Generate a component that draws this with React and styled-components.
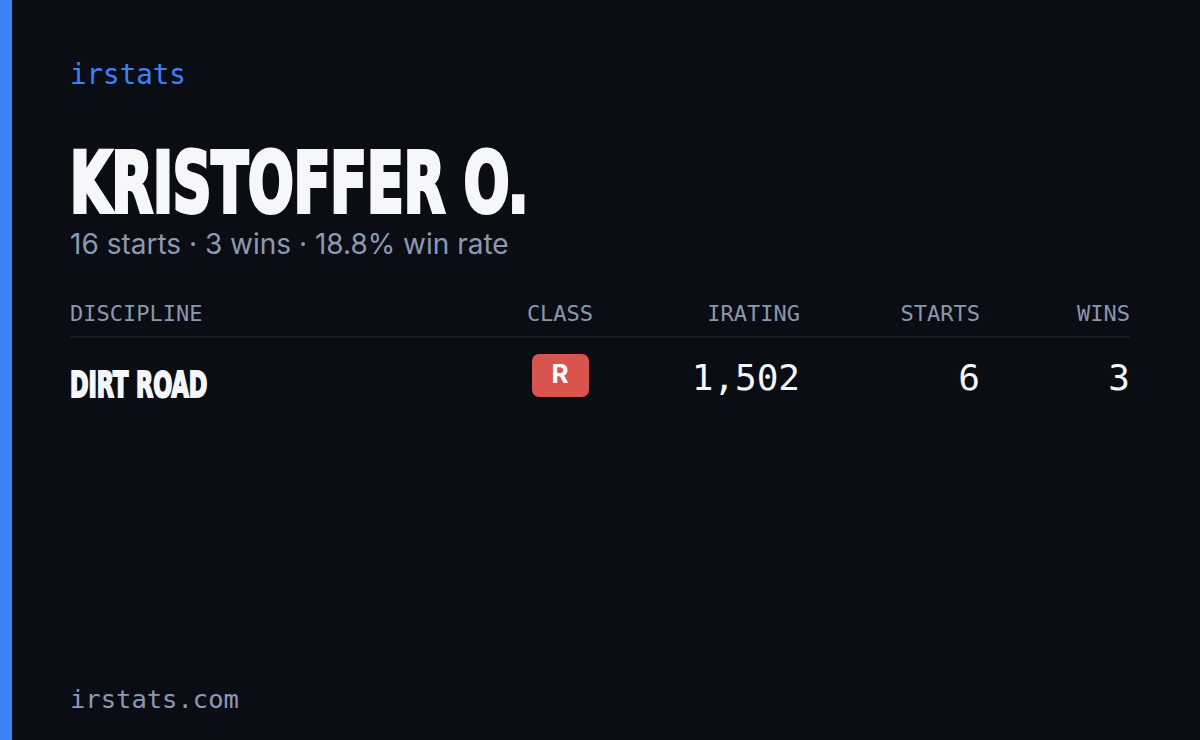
import styled, { createGlobalStyle } from 'styled-components';

const GlobalStyle = createGlobalStyle`
  html, body {
    margin: 0;
    padding: 0;
    background: #0a0d14;
  }
`;

const mono = `"DejaVu Sans Mono", "Liberation Mono", monospace`;
const condensed = `"DejaVu Sans Condensed", "DejaVu Sans", sans-serif`;
const sans = `Inter, "Noto Sans", sans-serif`;

const Card = styled.div`
  width: 1200px;
  height: 740px;
  display: flex;
  background: #0a0d14;
  overflow: hidden;
`;

const Accent = styled.div`
  width: 12px;
  flex-shrink: 0;
  background: #3b82f6;
`;

const Body = styled.main`
  flex: 1;
  display: flex;
  flex-direction: column;
  padding: 58px 70px 26px 58px;
`;

const Logo = styled.div`
  font-family: ${mono};
  font-size: 27.5px;
  line-height: 32px;
  color: #3b82f6;
`;

// condensed display face: squeeze DejaVu Condensed and thicken the stems
const Squeezed = styled.span`
  display: inline-block;
  font-family: ${condensed};
  font-weight: 700;
  color: #f5f7fb;
  white-space: nowrap;
  transform: scaleX(${(p) => p.$scale || 0.71});
  transform-origin: left center;
  -webkit-text-stroke: ${(p) => p.$stroke || 3}px #f5f7fb;
`;

const Name = styled.h1`
  margin: 51px 0 0;
  font-size: 84px;
  line-height: 84px;
  height: 84px;
`;

const Summary = styled.p`
  margin: 2px 0 0;
  font-family: ${sans};
  font-size: 28px;
  line-height: 34px;
  color: #8b99b3;
`;

const Table = styled.div`
  margin-top: 40px;
  display: grid;
  grid-template-columns: 1fr 120px 180px 180px 150px;
`;

const Head = styled.div`
  font-family: ${mono};
  font-size: 22px;
  line-height: 26px;
  color: #8a97ad;
  text-align: ${(p) => p.$align || 'left'};
  padding-bottom: 9px;
  border-bottom: 2px solid #171b26;
`;

const Cell = styled.div`
  display: flex;
  align-items: flex-start;
  justify-content: ${(p) => p.$justify || 'flex-end'};
  padding-top: 16px;
  height: 43px;
`;

const Discipline = styled(Squeezed)`
  margin-top: 13px;
  font-size: 36px;
  line-height: 36px;
`;

const Badge = styled.span`
  width: 57px;
  height: 43px;
  border-radius: 7px;
  background: #d9534f;
  color: #fff;
  font-family: ${sans};
  font-weight: 700;
  font-size: 26px;
  line-height: 1;
  padding-bottom: 3px;
  box-sizing: border-box;
  display: flex;
  align-items: center;
  justify-content: center;
`;

const Num = styled.span`
  margin-top: 6px;
  font-family: ${mono};
  font-size: 36px;
  line-height: 36px;
  color: #f5f7fb;
`;

const Spacer = styled.div`
  flex: 1;
`;

const Footer = styled.div`
  font-family: ${mono};
  font-size: 25.5px;
  color: #8b99b3;
`;

export default function App() {
  return (
    <>
      <GlobalStyle />
      <Card>
        <Accent />
        <Body>
          <Logo>irstats</Logo>
          <Name>
            <Squeezed $scale={0.71} $stroke={4}>KRISTOFFER O.</Squeezed>
          </Name>
          <Summary>16 starts · 3 wins · 18.8% win rate</Summary>
          <Table>
            <Head>DISCIPLINE</Head>
            <Head $align="center">CLASS</Head>
            <Head $align="right">IRATING</Head>
            <Head $align="right">STARTS</Head>
            <Head $align="right">WINS</Head>
            <Cell $justify="flex-start">
              <Discipline $scale={0.69} $stroke={2}>DIRT ROAD</Discipline>
            </Cell>
            <Cell $justify="center"><Badge>R</Badge></Cell>
            <Cell><Num>1,502</Num></Cell>
            <Cell><Num>6</Num></Cell>
            <Cell><Num>3</Num></Cell>
          </Table>
          <Spacer />
          <Footer>irstats.com</Footer>
        </Body>
      </Card>
    </>
  );
}
